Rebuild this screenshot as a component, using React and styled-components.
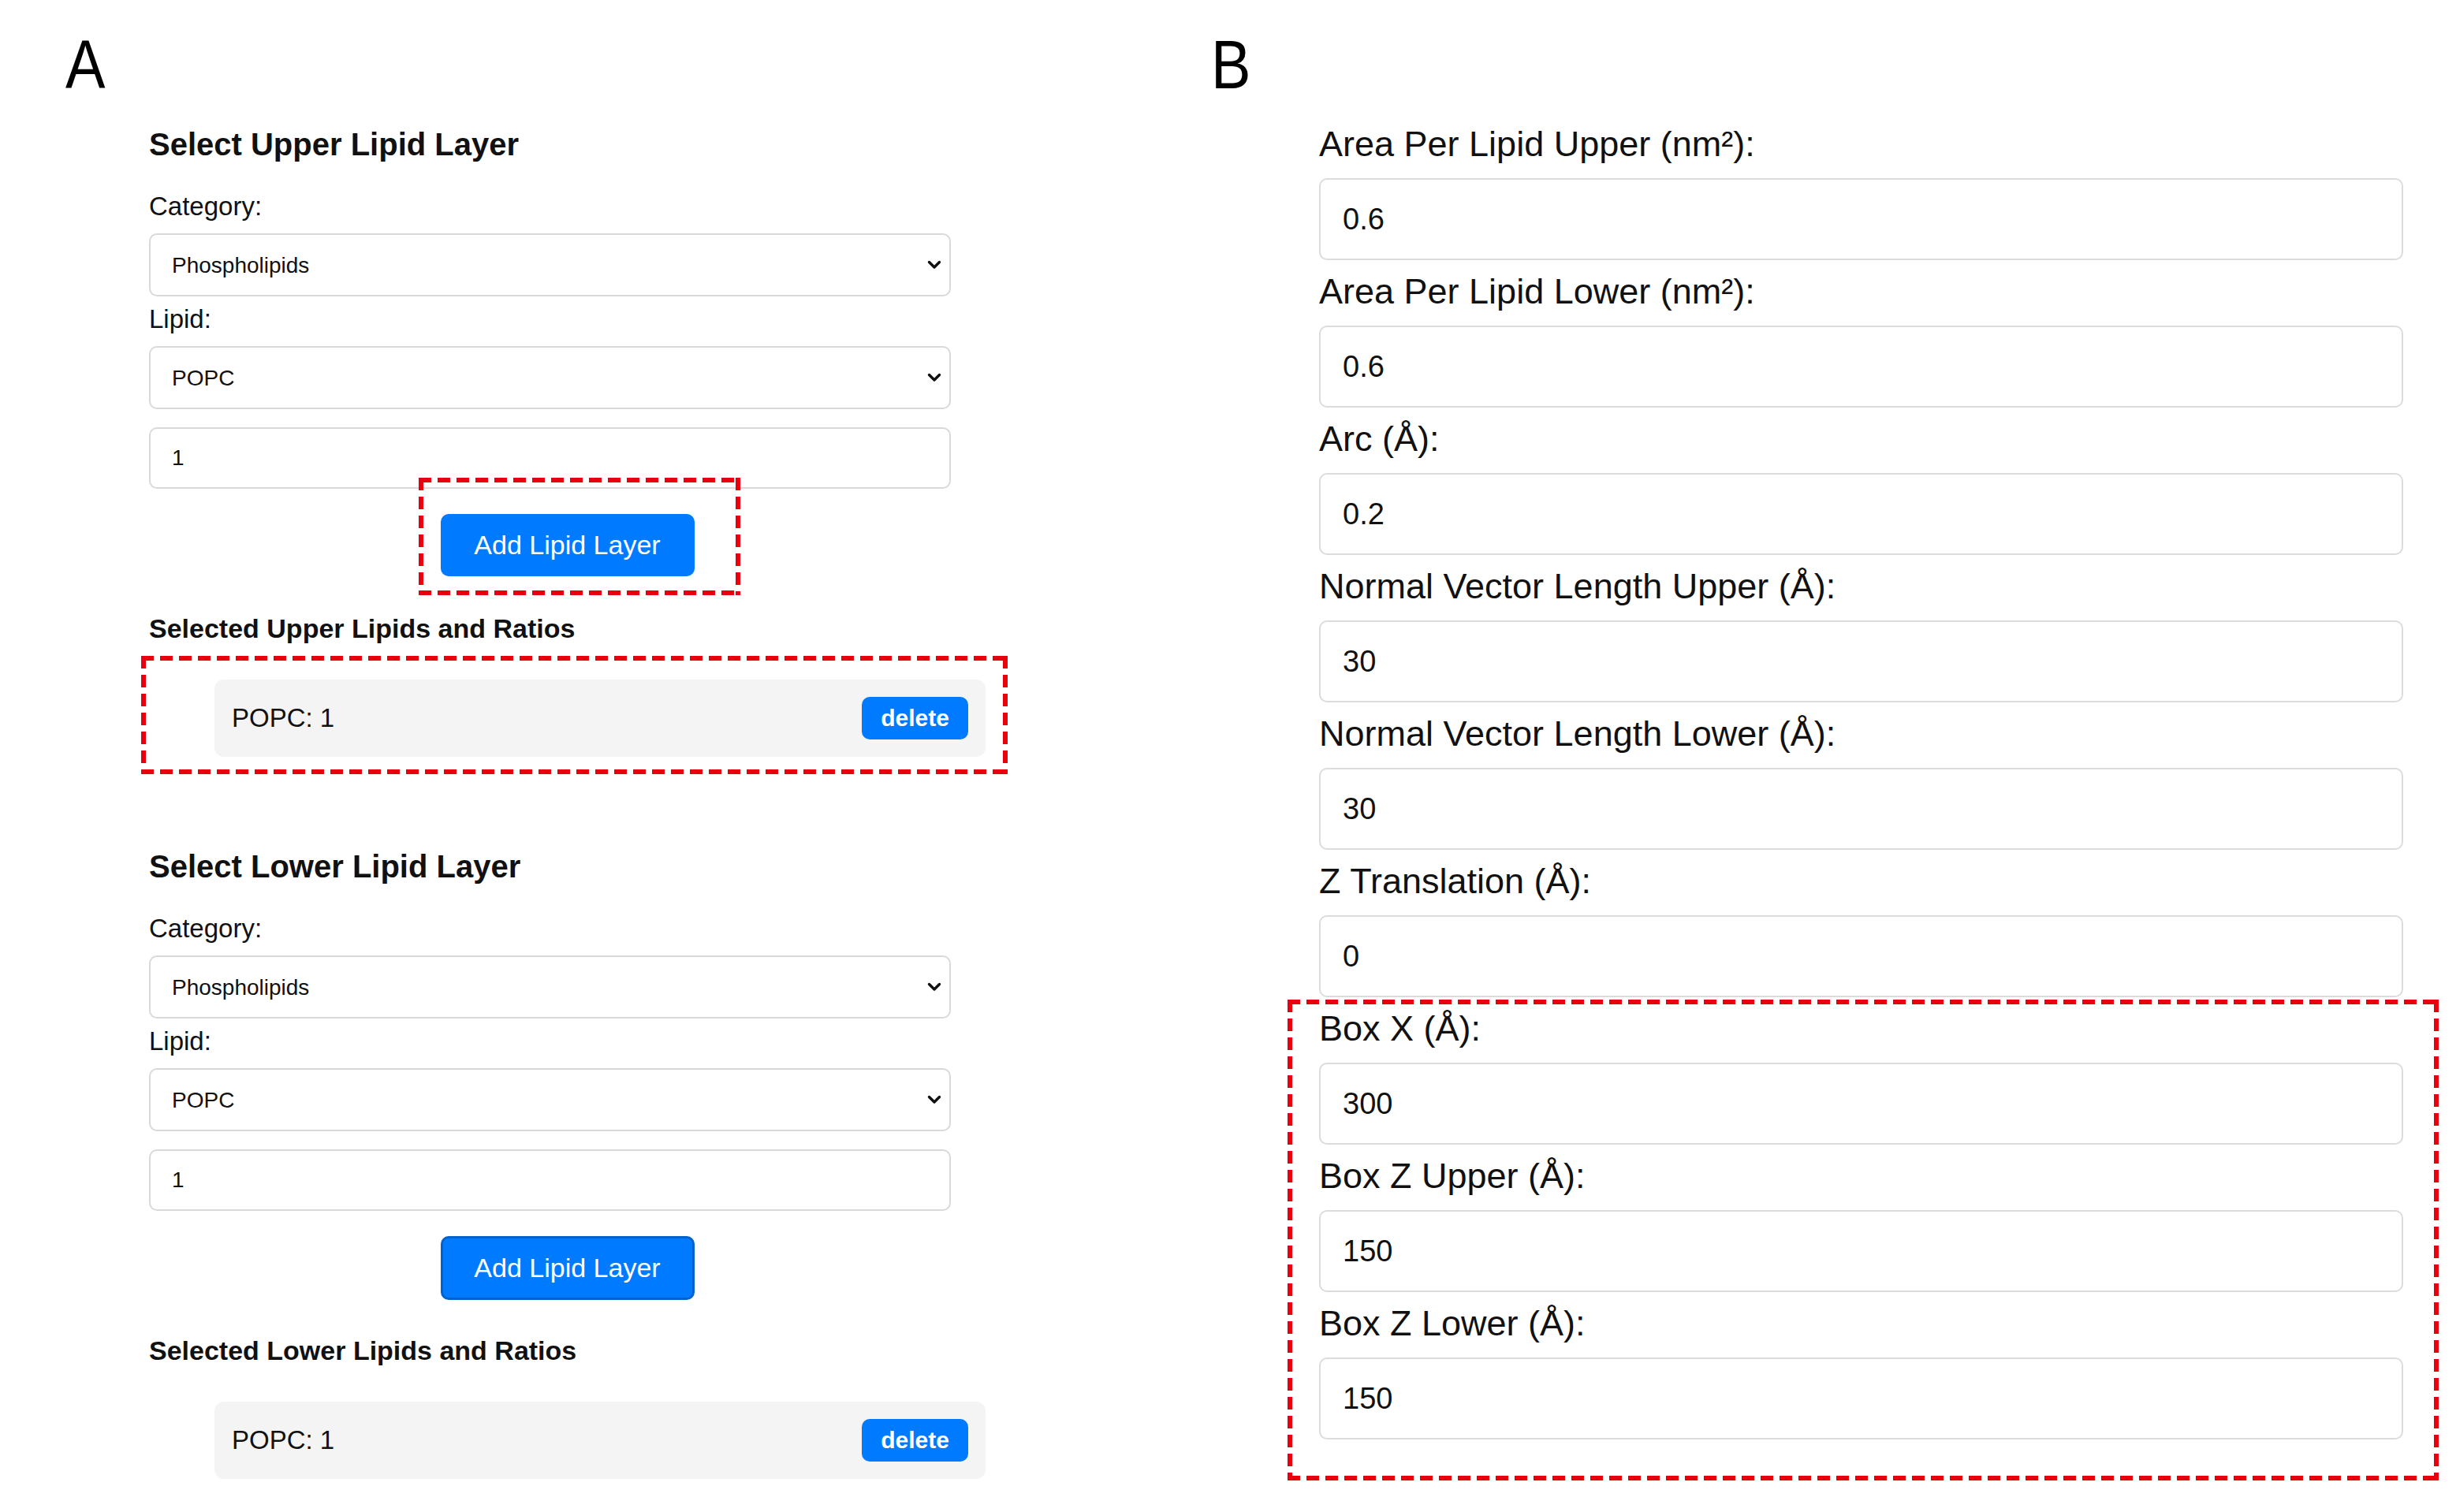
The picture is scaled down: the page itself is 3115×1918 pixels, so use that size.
import React from "react";
import styled, { createGlobalStyle } from "styled-components";

const GlobalStyle = createGlobalStyle`
  *, *::before, *::after {
    box-sizing: border-box;
  }

  body {
    margin: 0;
    background: #fff;
    color: #111;
    font-family: "Liberation Sans", Arial, Helvetica, sans-serif;
  }
`;

const Page = styled.div`
  display: flex;
  width: 3115px;
  height: 1918px;
  padding: 38px 0 0 83px;
`;

const Panel = styled.section`
  flex: 0 0 ${({ width }) => width};
`;

const PanelLetter = styled.div`
  height: 88px;
  font-size: 88px;
  line-height: 88px;
  color: #000;
  transform: scaleX(0.86);
  transform-origin: left center;
`;

const PanelBody = styled.div`
  margin-top: ${({ offset }) => offset}px;
  padding-left: ${({ indent }) => indent}px;
`;

const LayerColumn = styled.div`
  width: 1061px;
`;

const LayerTitle = styled.h3`
  margin: ${({ spaced }) => (spaced ? "116px" : "0")} 0 0;
  font-size: 40px;
  line-height: 46px;
  font-weight: bold;
`;

const FieldLabel = styled.label`
  display: block;
  margin-top: ${({ gap }) => gap}px;
  font-size: 33px;
  line-height: 40px;
`;

const SelectWrap = styled.div`
  position: relative;
  width: 1017px;
  height: 80px;
  margin-top: 14px;
`;

const SelectBox = styled.select`
  appearance: none;
  width: 100%;
  height: 100%;
  padding: 0 60px 0 27px;
  border: 2px solid #d9d9d9;
  border-radius: 10px;
  background: #fff;
  color: #111;
  font-family: inherit;
  font-size: 28px;
`;

const Chevron = styled.svg`
  position: absolute;
  right: 12px;
  top: 50%;
  width: 18px;
  height: 12px;
  transform: translateY(-50%);
  pointer-events: none;
`;

const RatioInput = styled.input`
  display: block;
  width: 1017px;
  height: 78px;
  margin-top: 23px;
  padding: 0 27px;
  border: 2px solid #d9d9d9;
  border-radius: 10px;
  color: #111;
  font-family: inherit;
  font-size: 28px;
`;

const ButtonRow = styled.div`
  display: flex;
  justify-content: center;
  margin-top: 32px;
`;

const ButtonAnchor = styled.div`
  position: relative;
`;

const AddButton = styled.button`
  width: 322px;
  height: ${({ focused }) => (focused ? 81 : 79)}px;
  border: ${({ focused }) => (focused ? "3px solid #0062cc" : "none")};
  border-radius: 10px;
  background: #007bff;
  color: #fff;
  font-family: inherit;
  font-size: 34px;
`;

const SelectedTitle = styled.h4`
  margin: ${({ gap }) => gap}px 0 0;
  font-size: 34px;
  line-height: 40px;
  font-weight: bold;
`;

const RatioList = styled.ul`
  position: relative;
  margin: 45px 0 0;
  padding: 0 0 0 83px;
  list-style: none;
`;

const RatioItem = styled.li`
  display: flex;
  align-items: center;
  justify-content: space-between;
  height: 98px;
  padding: 0 22px;
  border-radius: 12px;
  background: #f4f4f4;
  font-size: 33px;
`;

const DeleteButton = styled.button`
  width: 135px;
  height: 54px;
  border: none;
  border-radius: 10px;
  background: #007bff;
  color: #fff;
  font-family: inherit;
  font-size: 30px;
  font-weight: bold;
`;

// dashed red callout drawn over the highlighted controls: 16px dashes, 8px gaps
const dashX = "repeating-linear-gradient(90deg, #e8000f 0 16px, transparent 16px 24px)";
const dashY = "repeating-linear-gradient(180deg, #e8000f 0 16px, transparent 16px 24px)";

const Callout = styled.div`
  position: absolute;
  top: ${({ top }) => top}px;
  right: ${({ right }) => right}px;
  bottom: ${({ bottom }) => bottom}px;
  left: ${({ left }) => left}px;
  background:
    ${dashX} left top / 100% 6px no-repeat,
    ${dashX} left bottom / 100% 6px no-repeat,
    ${dashY} left top / 6px 100% no-repeat,
    ${dashY} right top / 6px 100% no-repeat;
  pointer-events: none;
`;

const ParamColumn = styled.div`
  width: 1375px;
`;

const ParamGroup = styled.div`
  position: relative;
`;

const ParamLabel = styled.label`
  display: block;
  font-size: 45px;
  line-height: 52px;
  color: #111;
`;

const ParamInput = styled.input`
  display: block;
  width: 100%;
  height: 104px;
  margin: 17px 0 14px;
  padding: 0 28px;
  border: 2px solid #dcdcdc;
  border-radius: 10px;
  color: #111;
  font-family: inherit;
  font-size: 38px;
`;

const ChevronIcon = () => (
  <Chevron viewBox="0 0 18 12">
    <path d="M2.5 2.5 L9 9 L15.5 2.5" fill="none" stroke="#111" strokeWidth="3.4" strokeLinecap="round" strokeLinejoin="round" />
  </Chevron>
);

const Dropdown = ({ value }) => (
  <SelectWrap>
    <SelectBox defaultValue={value}>
      <option value={value}>{value}</option>
    </SelectBox>
    <ChevronIcon />
  </SelectWrap>
);

const LayerPicker = ({ side, spaced, focused, highlight }) => (
  <>
    <LayerTitle spaced={spaced}>Select {side} Lipid Layer</LayerTitle>
    <FieldLabel gap={36}>Category:</FieldLabel>
    <Dropdown value="Phospholipids" />
    <FieldLabel gap={9}>Lipid:</FieldLabel>
    <Dropdown value="POPC" />
    <RatioInput type="text" defaultValue="1" />
    <ButtonRow>
      <ButtonAnchor>
        <AddButton focused={focused}>Add Lipid Layer</AddButton>
        {highlight && <Callout top={-46} right={-58} bottom={-24} left={-28} />}
      </ButtonAnchor>
    </ButtonRow>
    <SelectedTitle gap={focused ? 44 : 46}>Selected {side} Lipids and Ratios</SelectedTitle>
    <RatioList>
      <RatioItem>
        <span>POPC: 1</span>
        <DeleteButton>delete</DeleteButton>
      </RatioItem>
      {highlight && <Callout top={-30} right={-28} bottom={-22} left={-10} />}
    </RatioList>
  </>
);

const Param = ({ label, value }) => (
  <>
    <ParamLabel>{label}</ParamLabel>
    <ParamInput type="text" defaultValue={value} />
  </>
);

const membraneParams = [
  { label: "Area Per Lipid Upper (nm²):", value: "0.6" },
  { label: "Area Per Lipid Lower (nm²):", value: "0.6" },
  { label: "Arc (Å):", value: "0.2" },
  { label: "Normal Vector Length Upper (Å):", value: "30" },
  { label: "Normal Vector Length Lower (Å):", value: "30" },
  { label: "Z Translation (Å):", value: "0" },
];

const boxParams = [
  { label: "Box X (Å):", value: "300" },
  { label: "Box Z Upper (Å):", value: "150" },
  { label: "Box Z Lower (Å):", value: "150" },
];

export default function App() {
  return (
    <>
      <GlobalStyle />
      <Page>
        <Panel width="1453px">
          <PanelLetter>A</PanelLetter>
          <PanelBody offset={34} indent={106}>
            <LayerColumn>
              <LayerPicker side="Upper" highlight />
              <LayerPicker side="Lower" spaced focused />
            </LayerColumn>
          </PanelBody>
        </Panel>
        <Panel width="1579px">
          <PanelLetter>B</PanelLetter>
          <PanelBody offset={31} indent={137}>
            <ParamColumn>
              {membraneParams.map((p) => (
                <Param key={p.label} {...p} />
              ))}
              <ParamGroup>
                {boxParams.map((p) => (
                  <Param key={p.label} {...p} />
                ))}
                <Callout top={-11} right={-45} bottom={-52} left={-40} />
              </ParamGroup>
            </ParamColumn>
          </PanelBody>
        </Panel>
      </Page>
    </>
  );
}
